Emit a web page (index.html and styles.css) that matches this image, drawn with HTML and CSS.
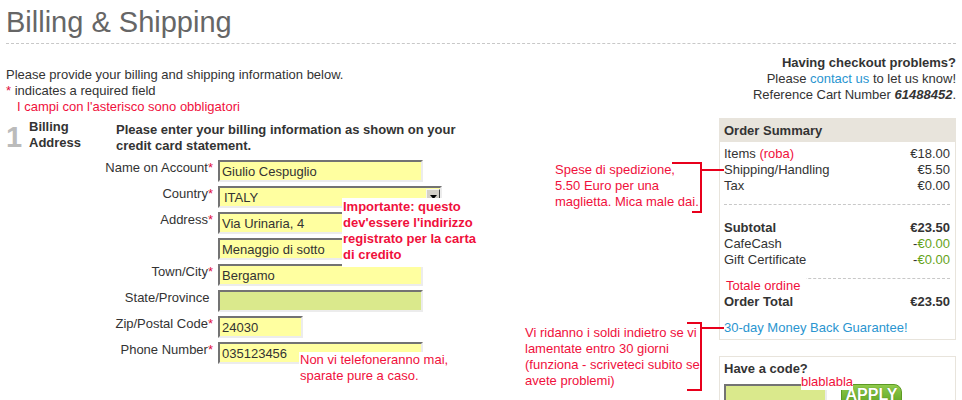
FILE: index.html
```html
<!DOCTYPE html>
<html lang="it">
<head>
    <meta charset="UTF-8">
    <meta name="viewport" content="width=device-width, initial-scale=1.0">
    <title>Billing &amp; Shipping</title>
    <link rel="stylesheet" href="styles.css">
</head>
<body>
    <h1 class="page-title">Billing &amp; Shipping</h1>
    <div class="main">
        <div class="billing">
            <p class="intro">Please provide your billing and shipping information below.<br>
                <span class="req">*</span> indicates a required field</p>
            <p class="note note-intro">I campi con l'asterisco sono obbligatori</p>
            <div class="step">
                <div class="step-num">1</div>
                <div class="step-title">Billing<br>Address</div>
                <div class="step-desc">Please enter your billing information as shown on your credit card statement.</div>
            </div>
            <form class="fields" action="#" method="POST">
                <label for="name">Name on Account<span class="req">*</span></label>
                <input class="field" type="text" id="name" value="Giulio Cespuglio">

                <label for="country">Country<span class="req">*</span></label>
                <div class="select">
                    <select id="country"><option>ITALY</option></select>
                    <span class="select-btn"><svg width="7" height="4" viewBox="0 0 7 4"><path d="M0 0h7L3.5 4z" fill="#000"/></svg></span>
                </div>

                <label for="address1">Address<span class="req">*</span></label>
                <input class="field" type="text" id="address1" value="Via Urinaria, 4">

                <span></span>
                <input class="field" type="text" id="address2" value="Menaggio di sotto">

                <label for="city">Town/City<span class="req">*</span></label>
                <input class="field" type="text" id="city" value="Bergamo">

                <label for="state">State/Province&nbsp;</label>
                <input class="field field-green" type="text" id="state" value="">

                <label for="zip">Zip/Postal Code<span class="req">*</span></label>
                <input class="field field-short" type="text" id="zip" value="24030">

                <label for="phone">Phone Number<span class="req">*</span></label>
                <input class="field" type="tel" id="phone" value="035123456">

                <p class="note note-address">Importante: questo dev'essere l'indirizzo registrato per la carta di credito</p>
                <p class="note note-phone">Non vi telefoneranno mai, sparate pure a caso.</p>
            </form>
        </div>

        <div class="side">
            <div class="help">
                <strong>Having checkout problems?</strong><br>
                Please <a href="#">contact us</a> to let us know!<br>
                Reference Cart Number <b><i>61488452</i></b>.
            </div>

            <div class="box summary">
                <div class="box-head">Order Summary</div>
                <div class="box-body">
                    <div class="line"><span>Items <span class="note-text">(roba)</span></span><span>€18.00</span></div>
                    <div class="line"><span>Shipping/Handling</span><span>€5.50</span></div>
                    <div class="line"><span>Tax</span><span>€0.00</span></div>
                    <div class="dash"></div>
                    <div class="line bold"><span>Subtotal</span><span>€23.50</span></div>
                    <div class="line"><span>CafeCash</span><span>-<span class="credit">€0.00</span></span></div>
                    <div class="line"><span>Gift Certificate</span><span>-<span class="credit">€0.00</span></span></div>
                    <div class="dash"></div>
                    <div class="line bold"><span>Order Total</span><span>€23.50</span></div>
                    <a class="guarantee" href="#">30-day Money Back Guarantee!</a>
                </div>
                <span class="note note-total">Totale ordine</span>
            </div>

            <div class="box code">
                <div class="box-body">
                    <div class="code-title">Have a code?</div>
                    <div class="code-row">
                        <input class="field field-green field-code" type="text">
                        <button class="apply" type="button">APPLY</button>
                    </div>
                </div>
                <span class="note note-bla">blablabla</span>
            </div>
        </div>

        <div class="callout callout-ship">Spese di spedizione,<br>5.50 Euro per una<br>maglietta. Mica male dai.</div>
        <svg class="bracket bracket-ship" width="58" height="56" viewBox="0 0 58 56">
            <polyline points="4,3 33,3 33,52 24,52" fill="none" stroke="#e8001c" stroke-width="2"/>
            <line x1="33" y1="10" x2="56" y2="10" stroke="#e8001c" stroke-width="2"/>
        </svg>

        <div class="callout callout-refund">Vi ridanno i soldi indietro se vi<br>lamentate entro 30 giorni<br>(funziona - scriveteci subito se<br>avete problemi)</div>
        <svg class="bracket bracket-refund" width="58" height="74" viewBox="0 0 58 74">
            <polyline points="19,3 33,3 33,70 19,70" fill="none" stroke="#e8001c" stroke-width="2"/>
            <line x1="33" y1="8" x2="56" y2="8" stroke="#e8001c" stroke-width="2"/>
        </svg>
    </div>
</body>
</html>
```

FILE: styles.css
```css
body {
    margin: 0;
    padding: 0 6px;
    font-family: "Liberation Sans", Arial, sans-serif;
    font-size: 13px;
    line-height: 16px;
    color: #333;
    background: #fff;
}
.page-title {
    margin: 6px 0 0;
    padding-bottom: 4px;
    font-size: 29px;
    line-height: 33px;
    font-weight: normal;
    color: #666;
    border-bottom: 1px dashed #c8c8c8;
}
.main {
    position: relative;
    display: flex;
    justify-content: space-between;
    align-items: flex-start;
}

/* left column */
.billing {
    width: 480px;
    padding-top: 23px;
}
.intro {
    margin: 0;
}
.req {
    color: #e0103c;
}
.note {
    margin: 0;
    color: #f0103c;
    background: #fff;
}
.note-intro {
    margin-left: 11px;
    background: none;
}
.step {
    display: flex;
    margin-top: 4px;
}
.step-num {
    width: 23px;
    margin-top: 4px;
    font-size: 29px;
    line-height: 29px;
    font-weight: bold;
    color: #bbb;
}
.step-title {
    width: 87px;
    font-weight: bold;
}
.step-desc {
    width: 360px;
    margin-top: 3px;
    font-weight: bold;
}
.fields {
    position: relative;
    display: grid;
    grid-template-columns: 207px auto;
    column-gap: 5px;
    row-gap: 4px;
    justify-items: start;
    margin: 6px 0 0;
}
.fields label {
    justify-self: end;
    align-self: start;
}
.field {
    box-sizing: border-box;
    width: 205px;
    height: 22px;
    margin: 0;
    padding: 0 2px;
    border: 2px solid;
    border-color: #737373 #ececec #ececec #737373;
    background: #ffffa0;
    font: 13px "Liberation Sans", Arial, sans-serif;
    color: #333;
    outline: none;
}
.field-short {
    width: 85px;
}
.field-green {
    background: #dae98c;
}
.select {
    box-sizing: border-box;
    display: flex;
    align-items: flex-start;
    width: 224px;
    height: 22px;
    border: 2px solid;
    border-color: #737373 #ececec #ececec #737373;
    background: #ffffa0;
}
.select select {
    flex: 1;
    height: 18px;
    padding: 0 0 0 4px;
    border: 0;
    background: transparent;
    appearance: none;
    -webkit-appearance: none;
    font: 13px "Liberation Sans", Arial, sans-serif;
    color: #333;
    outline: none;
}
.select-btn {
    box-sizing: border-box;
    display: flex;
    align-items: center;
    justify-content: center;
    width: 14px;
    height: 16px;
    margin-top: 1px;
    border: 1px solid;
    border-color: #f4f4f4 #404040 #404040 #f4f4f4;
    background: #d4d0c8;
}
.note-address {
    position: absolute;
    top: 38px;
    left: 336px;
    width: 140px;
    padding: 1px 3px 4px 1px;
    font-weight: bold;
}
.note-phone {
    position: absolute;
    top: 192px;
    left: 293px;
    width: 150px;
    padding: 0 4px 2px 1px;
}

/* right column */
.side {
    width: 237px;
    padding-top: 11px;
}
.help {
    text-align: right;
}
.help a,
.guarantee {
    color: #2a95d0;
    text-decoration: none;
}
.box {
    position: relative;
    border: 1px solid #e8e4dc;
}
.summary {
    margin-top: 15px;
}
.box-head {
    height: 23px;
    padding-left: 4px;
    line-height: 23px;
    font-weight: bold;
    background: #e8e4dc;
}
.box-body {
    padding: 4px 5px 3px 4px;
}
.line {
    display: flex;
    justify-content: space-between;
}
.bold {
    font-weight: bold;
}
.note-text {
    color: #f0103c;
}
.credit {
    color: #66a31a;
}
.dash {
    margin: 10px 0 15px;
    border-top: 1px dashed #c8c8c8;
}
.guarantee {
    display: block;
    margin-top: 10px;
}
.note-total {
    position: absolute;
    top: 159px;
    left: 0;
    padding: 0 6px;
}
.code {
    margin-top: 16px;
}
.code-title {
    font-weight: bold;
}
.code-row {
    display: flex;
    margin-top: 7px;
}
.field-code {
    width: 103px;
}
.apply {
    width: 61px;
    height: 22px;
    margin-left: 14px;
    padding: 0;
    border: 1px solid #5c9a22;
    border-radius: 2px 8px 0 0;
    background: linear-gradient(#8fcb4c, #5fa323);
    color: #fff;
    font: bold 16px "Liberation Sans", Arial, sans-serif;
    text-shadow: 0 0 1px #3d6e12;
}
.note-bla {
    position: absolute;
    top: 17px;
    left: 81px;
}

/* callouts */
.callout {
    position: absolute;
    color: #f0103c;
}
.callout-ship {
    top: 118px;
    left: 549px;
}
.callout-refund {
    top: 281px;
    left: 519px;
}
.bracket {
    position: absolute;
    left: 662px;
}
.bracket-ship {
    top: 116px;
}
.bracket-refund {
    top: 276px;
}
```
